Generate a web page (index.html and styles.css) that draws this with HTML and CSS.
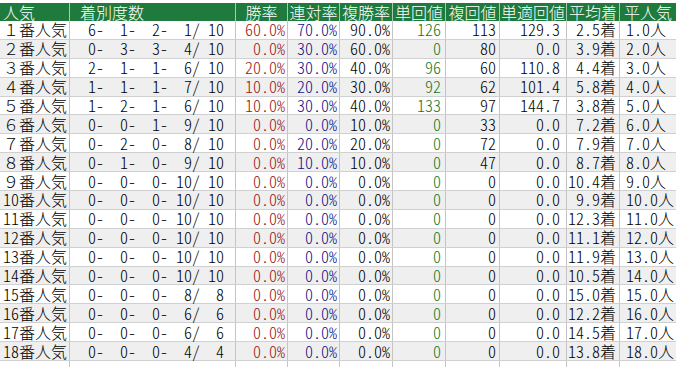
FILE: index.html
```html
<!DOCTYPE html>
<html lang="ja">
<head>
<meta charset="utf-8">
<title>人気別成績</title>
<link rel="stylesheet" href="styles.css">
</head>
<body>
<div class="sheet">
  <div class="row head">
    <div class="c h1">人気</div><div class="c h2">着別度数</div><div class="c">勝率</div><div class="c">連対率</div><div class="c">複勝率</div><div class="c">単回値</div><div class="c">複回値</div><div class="c">単適回値</div><div class="c">平均着</div><div class="c">平人気</div>
  </div>
  <div class="row"><div class="c lab">１番人気</div><div class="c tally"><span>6-</span><span>1-</span><span>2-</span><span>1/</span><span>10</span></div><div class="c win">60.0%</div><div class="c ren">70.0%</div><div class="c fuk">90.0%</div><div class="c tan">126</div><div class="c fkv">113</div><div class="c tek">129.3</div><div class="c avg">2.5着</div><div class="c pop">1.0人</div></div>
  <div class="row"><div class="c lab">２番人気</div><div class="c tally"><span>0-</span><span>3-</span><span>3-</span><span>4/</span><span>10</span></div><div class="c win">0.0%</div><div class="c ren">30.0%</div><div class="c fuk">60.0%</div><div class="c tan">0</div><div class="c fkv">80</div><div class="c tek">0.0</div><div class="c avg">3.9着</div><div class="c pop">2.0人</div></div>
  <div class="row"><div class="c lab">３番人気</div><div class="c tally"><span>2-</span><span>1-</span><span>1-</span><span>6/</span><span>10</span></div><div class="c win">20.0%</div><div class="c ren">30.0%</div><div class="c fuk">40.0%</div><div class="c tan">96</div><div class="c fkv">60</div><div class="c tek">110.8</div><div class="c avg">4.4着</div><div class="c pop">3.0人</div></div>
  <div class="row"><div class="c lab">４番人気</div><div class="c tally"><span>1-</span><span>1-</span><span>1-</span><span>7/</span><span>10</span></div><div class="c win">10.0%</div><div class="c ren">20.0%</div><div class="c fuk">30.0%</div><div class="c tan">92</div><div class="c fkv">62</div><div class="c tek">101.4</div><div class="c avg">5.8着</div><div class="c pop">4.0人</div></div>
  <div class="row"><div class="c lab">５番人気</div><div class="c tally"><span>1-</span><span>2-</span><span>1-</span><span>6/</span><span>10</span></div><div class="c win">10.0%</div><div class="c ren">30.0%</div><div class="c fuk">40.0%</div><div class="c tan">133</div><div class="c fkv">97</div><div class="c tek">144.7</div><div class="c avg">3.8着</div><div class="c pop">5.0人</div></div>
  <div class="row"><div class="c lab">６番人気</div><div class="c tally"><span>0-</span><span>0-</span><span>1-</span><span>9/</span><span>10</span></div><div class="c win">0.0%</div><div class="c ren">0.0%</div><div class="c fuk">10.0%</div><div class="c tan">0</div><div class="c fkv">33</div><div class="c tek">0.0</div><div class="c avg">7.2着</div><div class="c pop">6.0人</div></div>
  <div class="row"><div class="c lab">７番人気</div><div class="c tally"><span>0-</span><span>2-</span><span>0-</span><span>8/</span><span>10</span></div><div class="c win">0.0%</div><div class="c ren">20.0%</div><div class="c fuk">20.0%</div><div class="c tan">0</div><div class="c fkv">72</div><div class="c tek">0.0</div><div class="c avg">7.9着</div><div class="c pop">7.0人</div></div>
  <div class="row"><div class="c lab">８番人気</div><div class="c tally"><span>0-</span><span>1-</span><span>0-</span><span>9/</span><span>10</span></div><div class="c win">0.0%</div><div class="c ren">10.0%</div><div class="c fuk">10.0%</div><div class="c tan">0</div><div class="c fkv">47</div><div class="c tek">0.0</div><div class="c avg">8.7着</div><div class="c pop">8.0人</div></div>
  <div class="row"><div class="c lab">９番人気</div><div class="c tally"><span>0-</span><span>0-</span><span>0-</span><span>10/</span><span>10</span></div><div class="c win">0.0%</div><div class="c ren">0.0%</div><div class="c fuk">0.0%</div><div class="c tan">0</div><div class="c fkv">0</div><div class="c tek">0.0</div><div class="c avg">10.4着</div><div class="c pop">9.0人</div></div>
  <div class="row"><div class="c lab"><span class="hw">10</span>番人気</div><div class="c tally"><span>0-</span><span>0-</span><span>0-</span><span>10/</span><span>10</span></div><div class="c win">0.0%</div><div class="c ren">0.0%</div><div class="c fuk">0.0%</div><div class="c tan">0</div><div class="c fkv">0</div><div class="c tek">0.0</div><div class="c avg">9.9着</div><div class="c pop">10.0人</div></div>
  <div class="row"><div class="c lab"><span class="hw">11</span>番人気</div><div class="c tally"><span>0-</span><span>0-</span><span>0-</span><span>10/</span><span>10</span></div><div class="c win">0.0%</div><div class="c ren">0.0%</div><div class="c fuk">0.0%</div><div class="c tan">0</div><div class="c fkv">0</div><div class="c tek">0.0</div><div class="c avg">12.3着</div><div class="c pop">11.0人</div></div>
  <div class="row"><div class="c lab"><span class="hw">12</span>番人気</div><div class="c tally"><span>0-</span><span>0-</span><span>0-</span><span>10/</span><span>10</span></div><div class="c win">0.0%</div><div class="c ren">0.0%</div><div class="c fuk">0.0%</div><div class="c tan">0</div><div class="c fkv">0</div><div class="c tek">0.0</div><div class="c avg">11.1着</div><div class="c pop">12.0人</div></div>
  <div class="row"><div class="c lab"><span class="hw">13</span>番人気</div><div class="c tally"><span>0-</span><span>0-</span><span>0-</span><span>10/</span><span>10</span></div><div class="c win">0.0%</div><div class="c ren">0.0%</div><div class="c fuk">0.0%</div><div class="c tan">0</div><div class="c fkv">0</div><div class="c tek">0.0</div><div class="c avg">11.9着</div><div class="c pop">13.0人</div></div>
  <div class="row"><div class="c lab"><span class="hw">14</span>番人気</div><div class="c tally"><span>0-</span><span>0-</span><span>0-</span><span>10/</span><span>10</span></div><div class="c win">0.0%</div><div class="c ren">0.0%</div><div class="c fuk">0.0%</div><div class="c tan">0</div><div class="c fkv">0</div><div class="c tek">0.0</div><div class="c avg">10.5着</div><div class="c pop">14.0人</div></div>
  <div class="row"><div class="c lab"><span class="hw">15</span>番人気</div><div class="c tally"><span>0-</span><span>0-</span><span>0-</span><span>8/</span><span>8</span></div><div class="c win">0.0%</div><div class="c ren">0.0%</div><div class="c fuk">0.0%</div><div class="c tan">0</div><div class="c fkv">0</div><div class="c tek">0.0</div><div class="c avg">15.0着</div><div class="c pop">15.0人</div></div>
  <div class="row"><div class="c lab"><span class="hw">16</span>番人気</div><div class="c tally"><span>0-</span><span>0-</span><span>0-</span><span>6/</span><span>6</span></div><div class="c win">0.0%</div><div class="c ren">0.0%</div><div class="c fuk">0.0%</div><div class="c tan">0</div><div class="c fkv">0</div><div class="c tek">0.0</div><div class="c avg">12.2着</div><div class="c pop">16.0人</div></div>
  <div class="row"><div class="c lab"><span class="hw">17</span>番人気</div><div class="c tally"><span>0-</span><span>0-</span><span>0-</span><span>6/</span><span>6</span></div><div class="c win">0.0%</div><div class="c ren">0.0%</div><div class="c fuk">0.0%</div><div class="c tan">0</div><div class="c fkv">0</div><div class="c tek">0.0</div><div class="c avg">14.5着</div><div class="c pop">17.0人</div></div>
  <div class="row"><div class="c lab"><span class="hw">18</span>番人気</div><div class="c tally"><span>0-</span><span>0-</span><span>0-</span><span>4/</span><span>4</span></div><div class="c win">0.0%</div><div class="c ren">0.0%</div><div class="c fuk">0.0%</div><div class="c tan">0</div><div class="c fkv">0</div><div class="c tek">0.0</div><div class="c avg">13.8着</div><div class="c pop">18.0人</div></div>
  <div class="row tail"><div class="c"></div><div class="c"></div><div class="c"></div><div class="c"></div><div class="c"></div><div class="c"></div><div class="c"></div><div class="c"></div><div class="c"></div><div class="c"></div></div>
</div>
</body>
</html>
```

FILE: styles.css
```css
html, body {
  margin: 0;
  padding: 0;
  background: #ffffff;
}

body {
  font-family: "Noto Sans CJK JP", "Noto Sans", sans-serif;
  font-size: 16px;
  font-weight: 300;
  color: #000000;
  overflow: hidden;
  font-feature-settings: "hwid" 1;
}

.sheet {
  width: 677px;
  padding-top: 3px;
}

.row {
  display: grid;
  grid-template-columns: 70px 166px 52px 52px 53px 53px 54px 67px 53px 57px;
  height: 18.9px;
  box-sizing: border-box;
  border-bottom: 1px solid #d0d0d0;
  line-height: 17px;
}

.row:nth-child(odd) {
  background: #efefef;
}

.c {
  box-sizing: border-box;
  border-right: 1px solid #c4c4c4;
  display: flex;
  align-items: center;
  justify-content: flex-end;
  white-space: nowrap;
}

.row.head {
  height: 18px;
  background: #1f7a3d;
  color: #ffffff;
  border-bottom: none;
}

.row.head .c {
  justify-content: center;
  border-right: 1px solid rgba(255, 255, 255, 0.6);
}

.row.head .h1 {
  justify-content: flex-start;
  padding-left: 3px;
}

.row.head .h2 {
  justify-content: flex-start;
  padding-left: 10px;
}

.c.lab {
  justify-content: flex-start;
  padding-left: 3px;
  font-feature-settings: normal;
}

.lab .hw {
  font-feature-settings: "hwid" 1;
}

.c.tally {
  display: grid;
  grid-template-columns: 34px 32px 32px 32px 24px;
  justify-content: start;
  align-items: center;
}

.tally span {
  text-align: right;
}

.win {
  color: #9c1414;
  padding-right: 2px;
}

.ren {
  color: #121288;
  padding-right: 2px;
}

.fuk {
  padding-right: 2px;
}

.tan {
  color: #16771a;
  padding-right: 4px;
}

.fkv {
  padding-right: 3px;
}

.tek {
  padding-right: 6px;
}

.avg {
  padding-right: 3px;
}

.pop {
  justify-content: flex-start;
  padding-left: 6px;
}

.row.tail {
  background: #ffffff;
}
```
